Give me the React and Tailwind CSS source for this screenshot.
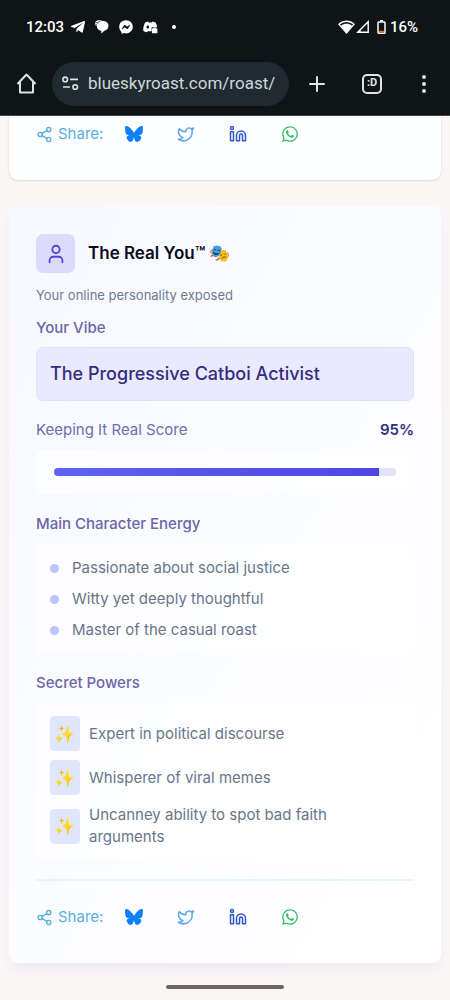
import { Plus, Share2, Twitter, Linkedin, User } from "lucide-react";
import { FaTelegramPlane, FaFacebookMessenger, FaWhatsapp } from "react-icons/fa";
import { FaBluesky } from "react-icons/fa6";

const traits = [
  "Passionate about social justice",
  "Witty yet deeply thoughtful",
  "Master of the casual roast",
];

const powers = [
  "Expert in political discourse",
  "Whisperer of viral memes",
  "Uncanney ability to spot bad faith arguments",
];

function ChatIcon() {
  return (
    <svg width="14" height="14" viewBox="0 0 14 14" fill="currentColor" aria-hidden="true">
      <path d="M.4 1.400C1.500.5 3 .2 5 .2h3.500C6 .5 3.800 1.200 2.300 2.800Z" />
      <path d="M7.600 1c3.500 0 5.900 2 5.900 4.800 0 2.600-1.600 4.300-4.100 4.900L6.300 13.500V10.900C3.600 10.600 1.800 8.700 1.800 6.100 1.800 3.100 4.300 1 7.600 1Z" />
      <path d="M0 2c.1 1.900.6 3.200 1.300 4.300 0-1.200.3-2.200.9-3Z" />
    </svg>
  );
}

function DiscordIcon() {
  return (
    <svg width="15" height="13" viewBox="0 0 15 13" fill="currentColor" aria-hidden="true">
      <path
        fillRule="evenodd"
        d="M5.200.5 5.600 1.400h3.200L9.300.5c1.200.2 2.200.5 3.200 1 .9 1.400 1.500 3 1.700 4.700H8.600v4H4.800L3.600 11.300C2.300 11 1.100 10.400.3 9.700c-.2-3 .4-5.700 1.800-8.200C3 1 4.100.7 5.200.5ZM4.800 4.600c-.8 0-1.300.7-1.300 1.400 0 .8.500 1.500 1.300 1.500S6.100 6.800 6.100 6c0-.7-.5-1.400-1.300-1.400Z"
      />
      <path d="M9 7.600h1.300V6.500h2.600v1.100h1.500v4.700H9Z" />
    </svg>
  );
}

function WifiIcon() {
  return (
    <svg width="17" height="14" viewBox="0 0 17 14" aria-hidden="true">
      <path d="M1 4.300C5.300.2 11.700.2 16 4.300L8.500 13Z" fill="none" stroke="#fff" strokeWidth="1.300" />
      <path d="M3 5.800C6.300 3.200 10.700 3.200 14 5.800L8.500 13Z" fill="#fff" />
    </svg>
  );
}

function SignalIcon() {
  return (
    <svg width="14" height="14" viewBox="0 0 14 14" aria-hidden="true">
      <path d="M12.200 1.800v10.500H1.700Z" fill="none" stroke="#fff" strokeWidth="1.400" />
      <path d="M1 13 5 9V13Z" fill="#fff" opacity=".55" />
    </svg>
  );
}

function BatteryIcon() {
  return (
    <svg width="9" height="14" viewBox="0 0 9 14" aria-hidden="true">
      <path d="M3 0h3v1.500H3Z" fill="#fff" />
      <rect x="1" y="2" width="7" height="11.200" rx=".8" fill="none" stroke="#fff" strokeWidth="1.500" />
      <path d="M1.800 10.800h5.400v1.900H1.800Z" fill="#f26a3d" />
    </svg>
  );
}

function TuneIcon() {
  return (
    <svg width="17" height="15" viewBox="0 0 17 15" fill="none" stroke="currentColor" strokeWidth="1.600" aria-hidden="true">
      <circle cx="3.200" cy="3.400" r="2.300" />
      <path d="M8 3.400h8M1 11h7" />
      <circle cx="13.200" cy="11" r="2.300" />
    </svg>
  );
}

function StatusBar() {
  return (
    <div className="flex h-[52px] items-center justify-between pl-[26px] pr-8 pt-[2px] text-white">
      <div className="flex items-center">
        <span className="w-[44px] text-[15px] font-medium">12:03</span>
        <FaTelegramPlane size={16} />
        <span className="ml-[9px]"><ChatIcon /></span>
        <FaFacebookMessenger size={14} className="ml-[10px]" />
        <span className="ml-[10px]"><DiscordIcon /></span>
        <span className="ml-[14px] size-1 rounded-full bg-white" />
      </div>
      <div className="flex items-center">
        <WifiIcon />
        <span className="ml-px"><SignalIcon /></span>
        <span className="ml-[7px]"><BatteryIcon /></span>
        <span className="ml-1 text-[15px] font-medium">16%</span>
      </div>
    </div>
  );
}

function BrowserBar() {
  return (
    <div className="flex h-[63px] items-center pl-[15px] pr-[14px] text-[#dde3e6]">
      <button aria-label="Home" className="shrink-0">
        <svg width="23" height="23" viewBox="0 0 23 23" fill="none" stroke="currentColor" strokeWidth="2" strokeLinejoin="round" aria-hidden="true">
          <path d="M2.500 12 11.500 2.500l9 9.500M5 10v10.500h13V10" />
        </svg>
      </button>
      <div className="ml-[14px] flex h-11 min-w-0 flex-1 items-center rounded-full bg-[#1f2b30] pl-[10px] pr-2">
        <button aria-label="Site information" className="shrink-0"><TuneIcon /></button>
        <input
          aria-label="Address"
          readOnly
          value="blueskyroast.com/roast/"
          className="ml-[9px] w-full min-w-0 bg-transparent text-[17px] text-[#cfd6da] outline-none"
        />
      </div>
      <button aria-label="New tab" className="ml-4 shrink-0"><Plus size={24} strokeWidth={2} /></button>
      <button aria-label="Tabs" className="ml-[33px] flex size-5 shrink-0 items-center justify-center rounded-[5px] border-2 border-current text-[11px] font-bold">
        :D
      </button>
      <button aria-label="Menu" className="ml-[30px] flex w-6 shrink-0 flex-col items-center gap-[3px]">
        <span className="size-1 rounded-full bg-current" />
        <span className="size-1 rounded-full bg-current" />
        <span className="size-1 rounded-full bg-current" />
      </button>
    </div>
  );
}

function ShareRow() {
  return (
    <div className="flex h-9 items-center text-[#5aaee0]">
      <Share2 size={17} strokeWidth={2} />
      <span className="ml-[5px] w-[67px] text-[15px]">Share:</span>
      <div className="flex items-center gap-[34px]">
        <a href="#bluesky" aria-label="Bluesky" className="text-[#0f80fb]"><FaBluesky size={18} /></a>
        <a href="#twitter" aria-label="Twitter" className="text-[#60a5ea]"><Twitter size={18} /></a>
        <a href="#linkedin" aria-label="LinkedIn" className="text-[#3158cc]"><Linkedin size={18} /></a>
        <a href="#whatsapp" aria-label="WhatsApp" className="text-[#34c064]"><FaWhatsapp size={18} /></a>
      </div>
    </div>
  );
}

function Label({ children }) {
  return <h3 className="text-[15px] leading-5 font-medium text-[#6c65a8]">{children}</h3>;
}

export default function App() {
  return (
    <div className="flex min-h-screen flex-col bg-[#faf6f5] font-['Inter','Noto_Color_Emoji',sans-serif]">
      <header className="border-b border-[#45494c] bg-[#0f1416] font-['Roboto',sans-serif]">
        <StatusBar />
        <BrowserBar />
      </header>

      <main className="flex flex-col gap-[26px] px-[9px]">
        <section className="rounded-b-[9px] bg-[#fdfeff] px-[27px] pb-7 shadow-sm">
          <ShareRow />
        </section>

        <section className="rounded-[9px] bg-linear-to-br from-[#f6f8ff] via-[#fbfcff] to-white px-[27px] pt-7 pb-7 shadow-[0_8px_14px_-4px_rgba(99,102,241,0.10)]">
          <div className="flex items-center gap-[13px]">
            <span className="flex size-[39px] items-center justify-center rounded-[7px] bg-[#dcdbfc] text-[#5346dc]">
              <User size={22} strokeWidth={2} />
            </span>
            <h2 className="text-[17px] font-semibold text-[#080c1c]">The Real You™ 🎭</h2>
          </div>
          <p className="mt-3 text-[13px] leading-5 text-[#6f7a8f]">Your online personality exposed</p>

          <div className="mt-[13px]">
            <Label>Your Vibe</Label>
            <p className="mt-[9px] rounded-[7px] border border-[#e0e0fa] bg-[#e9eafd] px-[13px] py-[13px] text-lg leading-[26px] font-medium text-[#352c80]">
              The Progressive Catboi Activist
            </p>
          </div>

          <div className="mt-[19px]">
            <div className="flex items-center justify-between">
              <h3 className="text-[15px] leading-5 text-[#706cab]">Keeping It Real Score</h3>
              <span className="text-[15px] leading-5 font-semibold text-[#352c80]">95%</span>
            </div>
            <div className="mt-[10px] rounded-[7px] bg-white/60 px-[18px] py-[18px]">
              <div role="progressbar" aria-label="Keeping It Real Score" aria-valuenow={95} className="h-2 overflow-hidden rounded-full bg-[#e0e4fb]">
                <div className="h-full w-[95%] bg-linear-to-r from-[#6163f0] to-[#4f46e2]" />
              </div>
            </div>
          </div>

          <div className="mt-5">
            <Label>Main Character Energy</Label>
            <ul className="mt-[10px] flex flex-col gap-[9px] rounded-[7px] bg-white/60 px-[14px] py-[13px]">
              {traits.map((t) => (
                <li key={t} className="flex items-center gap-[13px] text-[15px] leading-[22px] text-[#68758a]">
                  <span className="size-[9px] shrink-0 rounded-full bg-[#bcc3fb]" />
                  {t}
                </li>
              ))}
            </ul>
          </div>

          <div className="mt-[19px]">
            <Label>Secret Powers</Label>
            <ul className="mt-[10px] flex flex-col gap-[9px] rounded-[7px] bg-white/60 px-[14px] py-[13px]">
              {powers.map((p) => (
                <li key={p} className="flex items-center gap-[9px] text-[15px] leading-[22px] text-[#68758a]">
                  <span className="flex h-[35px] w-[30px] shrink-0 items-center justify-center rounded-[4px] bg-[#e0e6fe] text-[17px]">✨</span>
                  {p}
                </li>
              ))}
            </ul>
          </div>

          <hr className="mt-[18px] mb-[18px] border-t-2 border-[#e8f3fd]" />
          <ShareRow />
        </section>
      </main>

      <div className="mx-auto mt-auto mb-[11px] h-1 w-[118px] rounded-full bg-[#6b6463]" />
    </div>
  );
}
